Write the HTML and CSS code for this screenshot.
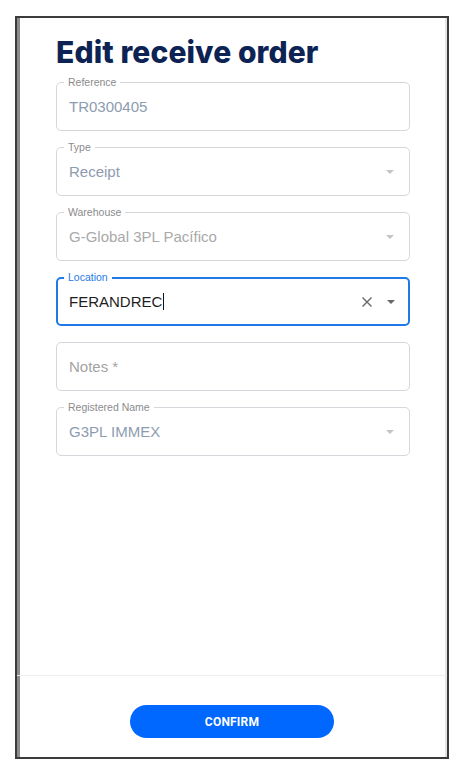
FILE: index.html
```html
<!DOCTYPE html>
<html lang="en">
<head>
    <meta charset="UTF-8">
    <meta name="viewport" content="width=device-width, initial-scale=1.0">
    <title>Edit receive order</title>
    <link rel="stylesheet" href="styles.css">
</head>
<body>
    <div class="frame">
        <div class="content">
            <h1 class="title">Edit receive order</h1>

            <div class="field">
                <span class="label">Reference</span>
                <span class="value">TR0300405</span>
            </div>

            <div class="field">
                <span class="label">Type</span>
                <span class="value">Receipt</span>
                <span class="arrow"></span>
            </div>

            <div class="field disabled">
                <span class="label">Warehouse</span>
                <span class="value">G-Global 3PL Pacífico</span>
                <span class="arrow"></span>
            </div>

            <div class="field focused">
                <span class="label">Location</span>
                <span class="value">FERANDREC<span class="caret"></span></span>
                <svg class="clear" width="12" height="12" viewBox="0 0 12 12">
                    <path d="M1.5 1.5l9 9M10.5 1.5l-9 9" stroke="#666" stroke-width="1.4" fill="none"/>
                </svg>
                <span class="arrow"></span>
            </div>

            <div class="field">
                <span class="value placeholder">Notes *</span>
            </div>

            <div class="field">
                <span class="label">Registered Name</span>
                <span class="value">G3PL IMMEX</span>
                <span class="arrow"></span>
            </div>
        </div>

        <div class="footer">
            <button class="confirm">CONFIRM</button>
        </div>
    </div>
</body>
</html>
```

FILE: styles.css
```css
* {
    margin: 0;
    padding: 0;
    box-sizing: border-box;
}

body {
    font-family: "Liberation Sans", Arial, sans-serif;
    background: #fff;
    width: 458px;
    height: 768px;
    overflow: hidden;
}

.frame {
    display: flex;
    flex-direction: column;
    width: 434px;
    height: 743px;
    margin: 16px 0 0 15px;
    border: 2px solid #3b3b3b;
    box-shadow: inset 3px 0 0 #8c8c8c, inset -2px 0 0 #e4e4e4;
}

.content {
    flex: 1;
    display: flex;
    flex-direction: column;
    gap: 16px;
    padding: 16px 37px 0 39px;
}

.title {
    font-family: Inter, "Open Sans", sans-serif;
    font-weight: 800;
    font-size: 30px;
    line-height: 36px;
    color: #0c2354;
    letter-spacing: 0.1px;
    margin-bottom: -4px;
}

/* outlined text field */
.field {
    position: relative;
    display: flex;
    align-items: center;
    height: 49px;
    padding: 0 12px;
    border: 1px solid #d4d8dd;
    border-radius: 5px;
}

.label {
    position: absolute;
    top: -8px;
    left: 7px;
    padding: 0 4px;
    background: #fff;
    font-size: 10.5px;
    line-height: 14px;
    color: #8b8b8b;
}

.value {
    flex: 1;
    font-size: 15px;
    color: #8d9cb0;
}

.disabled .value {
    color: #a9a9a9;
}

.placeholder {
    color: #a3a3a3;
}

.arrow {
    width: 0;
    height: 0;
    margin-right: 3px;
    border-left: 4.5px solid transparent;
    border-right: 4.5px solid transparent;
    border-top: 4.5px solid #c4c4c4;
}

.focused {
    border: 2px solid #1f7ae8;
    padding: 0 11px;
}

.focused .label {
    top: -9px;
    left: 6px;
    color: #1f7ae8;
}

.focused .value {
    color: #1e1e1e;
}

.focused .arrow {
    border-top-color: #666;
    margin-right: 2px;
}

.caret {
    display: inline-block;
    width: 1px;
    height: 17px;
    margin-left: 1px;
    vertical-align: -3px;
    background: #111;
}

.clear {
    margin-right: 14px;
}

.footer {
    display: flex;
    justify-content: center;
    height: 82px;
    padding-top: 29px;
    border-top: 1px solid #eeeeee;
}

.confirm {
    width: 204px;
    height: 33px;
    border: none;
    border-radius: 17px;
    background: #0067ff;
    color: #fff;
    font-family: Roboto, "Liberation Sans", sans-serif;
    font-weight: 700;
    font-size: 12px;
    letter-spacing: 0.2px;
}
```
